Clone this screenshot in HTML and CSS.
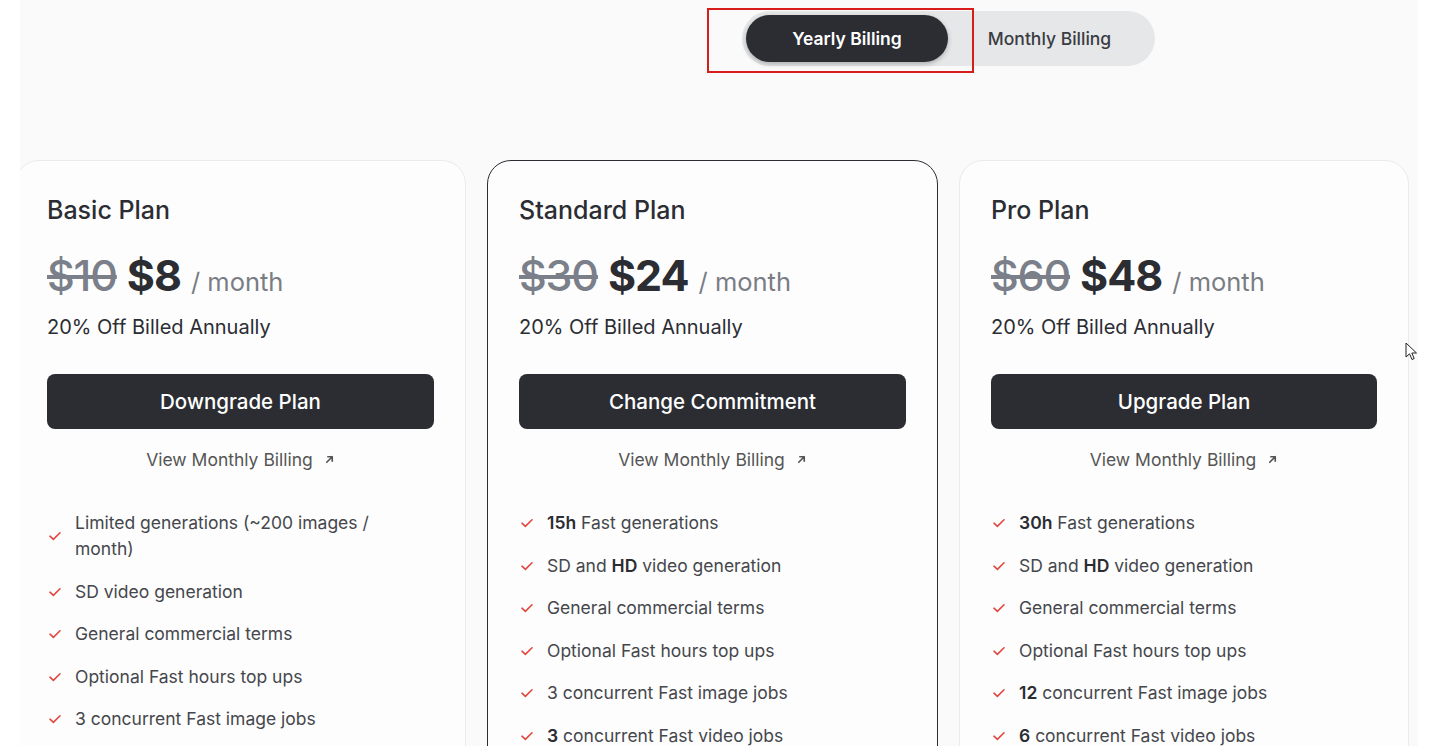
FILE: index.html
```html
<!DOCTYPE html>
<html lang="en">
<head>
<meta charset="utf-8">
<title>Pricing</title>
<link rel="stylesheet" href="styles.css">
</head>
<body>
<div class="panel">
  <div class="toggle-row">
    <div class="toggle">
      <button class="tbtn active">Yearly Billing</button>
      <button class="tbtn">Monthly Billing</button>
      <div class="annot"></div>
    </div>
  </div>

  <div class="cards">
    <section class="card">
      <h2 class="title">Basic Plan</h2>
      <div class="price"><s class="old">$10</s><span class="now">$8</span><span class="per">/ month</span></div>
      <p class="off">20% Off Billed Annually</p>
      <button class="cta">Downgrade Plan</button>
      <a class="view">View Monthly Billing <svg class="arr" viewBox="0 0 12 12" width="11" height="11"><path d="M3 9 L9 3 M4.2 3 H9 V7.8" fill="none" stroke="#555" stroke-width="1.8" stroke-linecap="round" stroke-linejoin="round"/></svg></a>
      <ul class="feats">
        <li><svg class="chk" viewBox="0 0 14 14"><path d="M2 7.2 L5.4 10.4 L12 3.8" fill="none" stroke="#e0483e" stroke-width="1.6" stroke-linecap="round" stroke-linejoin="round"/></svg><span>Limited generations (~200 images / month)</span></li>
        <li><svg class="chk" viewBox="0 0 14 14"><path d="M2 7.2 L5.4 10.4 L12 3.8" fill="none" stroke="#e0483e" stroke-width="1.6" stroke-linecap="round" stroke-linejoin="round"/></svg><span>SD video generation</span></li>
        <li><svg class="chk" viewBox="0 0 14 14"><path d="M2 7.2 L5.4 10.4 L12 3.8" fill="none" stroke="#e0483e" stroke-width="1.6" stroke-linecap="round" stroke-linejoin="round"/></svg><span>General commercial terms</span></li>
        <li><svg class="chk" viewBox="0 0 14 14"><path d="M2 7.2 L5.4 10.4 L12 3.8" fill="none" stroke="#e0483e" stroke-width="1.6" stroke-linecap="round" stroke-linejoin="round"/></svg><span>Optional Fast hours top ups</span></li>
        <li><svg class="chk" viewBox="0 0 14 14"><path d="M2 7.2 L5.4 10.4 L12 3.8" fill="none" stroke="#e0483e" stroke-width="1.6" stroke-linecap="round" stroke-linejoin="round"/></svg><span>3 concurrent Fast image jobs</span></li>
      </ul>
    </section>

    <section class="card featured">
      <h2 class="title">Standard Plan</h2>
      <div class="price"><s class="old">$30</s><span class="now">$24</span><span class="per">/ month</span></div>
      <p class="off">20% Off Billed Annually</p>
      <button class="cta">Change Commitment</button>
      <a class="view">View Monthly Billing <svg class="arr" viewBox="0 0 12 12" width="11" height="11"><path d="M3 9 L9 3 M4.2 3 H9 V7.8" fill="none" stroke="#555" stroke-width="1.8" stroke-linecap="round" stroke-linejoin="round"/></svg></a>
      <ul class="feats">
        <li><svg class="chk" viewBox="0 0 14 14"><path d="M2 7.2 L5.4 10.4 L12 3.8" fill="none" stroke="#e0483e" stroke-width="1.6" stroke-linecap="round" stroke-linejoin="round"/></svg><span><b>15h</b> Fast generations</span></li>
        <li><svg class="chk" viewBox="0 0 14 14"><path d="M2 7.2 L5.4 10.4 L12 3.8" fill="none" stroke="#e0483e" stroke-width="1.6" stroke-linecap="round" stroke-linejoin="round"/></svg><span>SD and <b>HD</b> video generation</span></li>
        <li><svg class="chk" viewBox="0 0 14 14"><path d="M2 7.2 L5.4 10.4 L12 3.8" fill="none" stroke="#e0483e" stroke-width="1.6" stroke-linecap="round" stroke-linejoin="round"/></svg><span>General commercial terms</span></li>
        <li><svg class="chk" viewBox="0 0 14 14"><path d="M2 7.2 L5.4 10.4 L12 3.8" fill="none" stroke="#e0483e" stroke-width="1.6" stroke-linecap="round" stroke-linejoin="round"/></svg><span>Optional Fast hours top ups</span></li>
        <li><svg class="chk" viewBox="0 0 14 14"><path d="M2 7.2 L5.4 10.4 L12 3.8" fill="none" stroke="#e0483e" stroke-width="1.6" stroke-linecap="round" stroke-linejoin="round"/></svg><span>3 concurrent Fast image jobs</span></li>
        <li><svg class="chk" viewBox="0 0 14 14"><path d="M2 7.2 L5.4 10.4 L12 3.8" fill="none" stroke="#e0483e" stroke-width="1.6" stroke-linecap="round" stroke-linejoin="round"/></svg><span><b>3</b> concurrent Fast video jobs</span></li>
      </ul>
    </section>

    <section class="card">
      <h2 class="title">Pro Plan</h2>
      <div class="price"><s class="old">$60</s><span class="now">$48</span><span class="per">/ month</span></div>
      <p class="off">20% Off Billed Annually</p>
      <button class="cta">Upgrade Plan</button>
      <a class="view">View Monthly Billing <svg class="arr" viewBox="0 0 12 12" width="11" height="11"><path d="M3 9 L9 3 M4.2 3 H9 V7.8" fill="none" stroke="#555" stroke-width="1.8" stroke-linecap="round" stroke-linejoin="round"/></svg></a>
      <ul class="feats">
        <li><svg class="chk" viewBox="0 0 14 14"><path d="M2 7.2 L5.4 10.4 L12 3.8" fill="none" stroke="#e0483e" stroke-width="1.6" stroke-linecap="round" stroke-linejoin="round"/></svg><span><b>30h</b> Fast generations</span></li>
        <li><svg class="chk" viewBox="0 0 14 14"><path d="M2 7.2 L5.4 10.4 L12 3.8" fill="none" stroke="#e0483e" stroke-width="1.6" stroke-linecap="round" stroke-linejoin="round"/></svg><span>SD and <b>HD</b> video generation</span></li>
        <li><svg class="chk" viewBox="0 0 14 14"><path d="M2 7.2 L5.4 10.4 L12 3.8" fill="none" stroke="#e0483e" stroke-width="1.6" stroke-linecap="round" stroke-linejoin="round"/></svg><span>General commercial terms</span></li>
        <li><svg class="chk" viewBox="0 0 14 14"><path d="M2 7.2 L5.4 10.4 L12 3.8" fill="none" stroke="#e0483e" stroke-width="1.6" stroke-linecap="round" stroke-linejoin="round"/></svg><span>Optional Fast hours top ups</span></li>
        <li><svg class="chk" viewBox="0 0 14 14"><path d="M2 7.2 L5.4 10.4 L12 3.8" fill="none" stroke="#e0483e" stroke-width="1.6" stroke-linecap="round" stroke-linejoin="round"/></svg><span><b>12</b> concurrent Fast image jobs</span></li>
        <li><svg class="chk" viewBox="0 0 14 14"><path d="M2 7.2 L5.4 10.4 L12 3.8" fill="none" stroke="#e0483e" stroke-width="1.6" stroke-linecap="round" stroke-linejoin="round"/></svg><span><b>6</b> concurrent Fast video jobs</span></li>
      </ul>
    </section>
  </div>

  <svg class="cursor" viewBox="0 0 14 20" width="14" height="20"><path d="M1 1 L1 15 L4.5 11.8 L7 17.5 L9.2 16.5 L6.8 11 L11.5 11 Z" fill="#fff" stroke="#222" stroke-width="1" stroke-linejoin="round"/></svg>
</div>
</body>
</html>
```

FILE: styles.css
```css
* { box-sizing: border-box; }
html, body { margin: 0; padding: 0; background: #ffffff; }
body {
  font-family: Inter, "Noto Sans", "Liberation Sans", sans-serif;
  color: #2b2d33;
  width: 1440px;
  height: 746px;
  overflow: hidden;
}
.panel {
  position: relative;
  margin-left: 20px;
  width: 1398px;
  height: 746px;
  background: #fafafa;
  overflow: hidden;
}
.toggle-row {
  display: flex;
  padding-top: 11px;
  padding-left: 722px;
}
.toggle {
  position: relative;
  display: flex;
  align-items: center;
  height: 55px;
  padding: 4px;
  border-radius: 28px;
  background: #e6e7e9;
}
.tbtn {
  font-family: inherit;
  border: 0;
  background: transparent;
  height: 47px;
  border-radius: 24px;
  font-size: 17.5px;
  font-weight: 500;
  color: #3a3c42;
  cursor: pointer;
  padding: 0;
}
.tbtn.active {
  width: 202px;
  background: #2b2d33;
  color: #fff;
  font-weight: 600;
  box-shadow: 0 2px 5px rgba(0,0,0,0.25);
}
.tbtn:not(.active) { width: 203px; }
.annot {
  position: absolute;
  left: -35px;
  top: -3px;
  width: 267px;
  height: 65px;
  border: 2px solid #d81b1b;
}
.cards {
  display: grid;
  grid-template-columns: 451px 451px 450px;
  column-gap: 21px;
  margin-top: 94px;
  margin-left: -5px;
}
.card {
  background: #fdfdfd;
  border: 1px solid #ebebeb;
  border-radius: 24px;
  padding: 33px 31px 0;
  height: 620px;
}
.card.featured { border-color: #2b2d33; }
.title {
  margin: 0;
  font-size: 25px;
  line-height: 32px;
  font-weight: 500;
  color: #2b2d33;
}
.price {
  display: flex;
  align-items: baseline;
  margin-top: 23px;
  height: 48px;
}
.old {
  font-size: 43px;
  font-weight: 500;
  color: #7a7f8a;
  letter-spacing: -1.2px;
  margin-right: 10px;
}
.now {
  font-size: 43px;
  font-weight: 700;
  color: #2b2d33;
  letter-spacing: -1px;
  margin-right: 10px;
}
.per {
  font-size: 25.5px;
  color: #7a7d84;
  font-weight: 400;
}
.off {
  margin: 17px 0 0;
  font-size: 20px;
  line-height: 26px;
  color: #2b2d33;
}
.cta {
  display: block;
  width: 100%;
  height: 55px;
  margin-top: 34px;
  border: 0;
  border-radius: 8px;
  background: #2b2d33;
  color: #fff;
  font-family: inherit;
  font-size: 20.5px;
  font-weight: 500;
}
.view {
  display: flex;
  justify-content: center;
  align-items: center;
  gap: 11px;
  margin-top: 19px;
  font-size: 17.5px;
  line-height: 24px;
  color: #555;
}
.arr { margin-top: -2px; }
.feats {
  list-style: none;
  margin: 38px 0 0;
  padding: 0;
  display: flex;
  flex-direction: column;
  gap: 16.5px;
}
.feats li {
  display: flex;
  align-items: center;
  gap: 13px;
  font-size: 17.5px;
  line-height: 26px;
  color: #45474c;
  padding-right: 55px;
}
.feats li b { font-weight: 600; color: #2b2d33; }
.chk { width: 14px; height: 14px; flex: none; margin-left: 1px; }
.cursor {
  position: absolute;
  left: 1385px;
  top: 342px;
}
```
